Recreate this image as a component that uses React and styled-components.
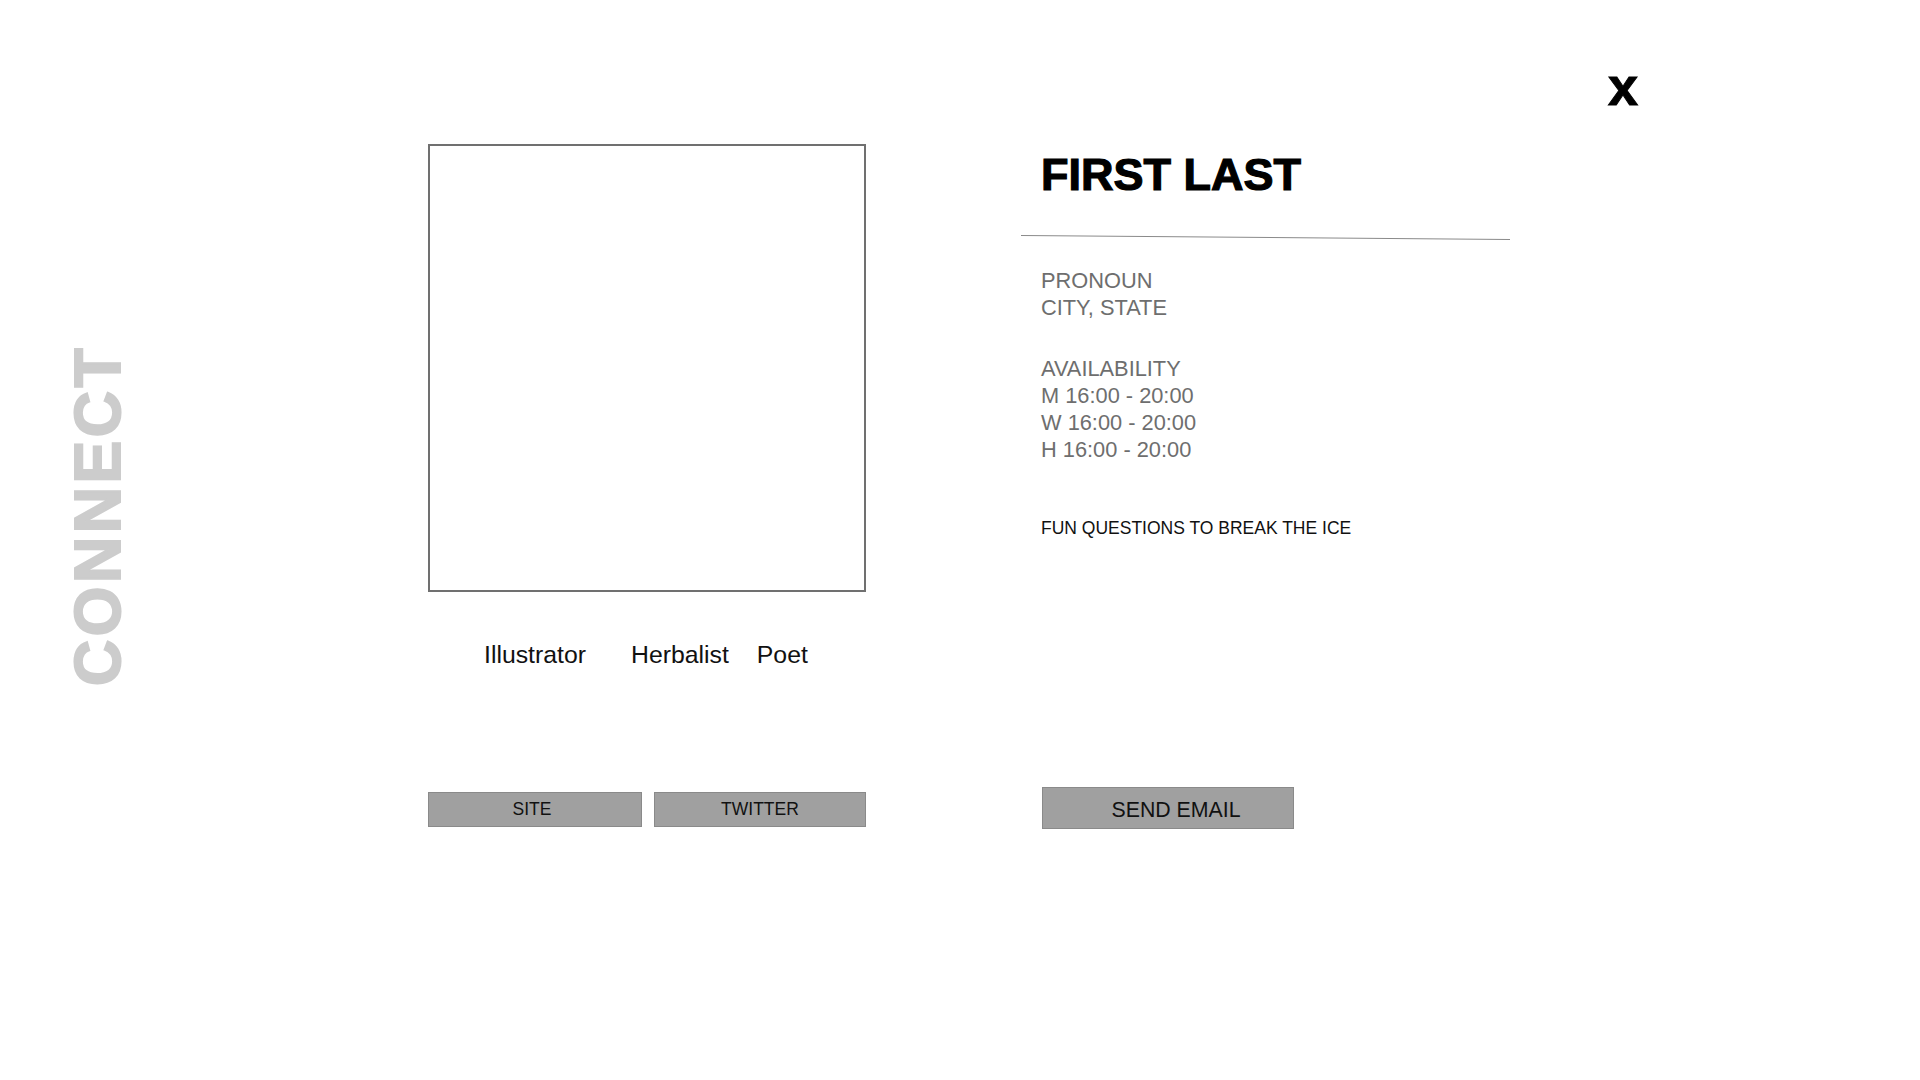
import React from "react";
import styled, { createGlobalStyle } from "styled-components";

const GlobalStyle = createGlobalStyle`
  html, body {
    margin: 0;
    padding: 0;
    background: #fff;
  }
  body {
    font-family: "Liberation Sans", Arial, Helvetica, sans-serif;
  }
  * {
    box-sizing: border-box;
  }
`;

const Page = styled.main`
  display: flex;
  width: 1920px;
  height: 1080px;
  background: #fff;
  overflow: hidden;
`;

// vertical "CONNECT" label on the far left
const Side = styled.aside`
  width: 195px;
  display: flex;
  align-items: center;
  justify-content: center;
  padding-bottom: 50px;
`;

const SideLabel = styled.h2`
  margin: 0;
  writing-mode: vertical-rl;
  transform: rotate(180deg);
  font-size: 64px;
  font-weight: 700;
  letter-spacing: 3.5px;
  line-height: 1;
  color: #cccccc;
  -webkit-text-stroke: 2px #cccccc;
`;

const Profile = styled.section`
  width: 438px;
  margin-left: 233px;
  padding-top: 144px;
  display: flex;
  flex-direction: column;
`;

const Photo = styled.div`
  width: 438px;
  height: 448px;
  border: 2px solid #707070;
  background: #fff;
`;

const Tags = styled.ul`
  list-style: none;
  display: flex;
  margin: 49px 0 0;
  padding: 0 0 0 56px;
`;

const Tag = styled.li`
  margin-left: ${(p) => p.$offset || 0}px;
  font-size: 24.8px;
  line-height: 28px;
  color: #111;
`;

const Links = styled.div`
  display: flex;
  gap: 12px;
  margin-top: 123px;
`;

const LinkButton = styled.button`
  width: ${(p) => p.$width}px;
  height: 35px;
  padding: 0 ${(p) => p.$shift || 0}px 0 0;
  background: #a0a0a0;
  border: 1px solid #8a8a8a;
  font-family: "Liberation Sans", Arial, sans-serif;
  font-size: 17.5px;
  color: #111;
  cursor: pointer;
`;

const Details = styled.section`
  width: 489px;
  margin-left: 155px;
  padding-top: 149px;
  display: flex;
  flex-direction: column;
`;

const Name = styled.h1`
  margin: 0;
  padding-left: 20px;
  font-size: 45px;
  line-height: 52px;
  font-weight: 700;
  color: #000;
  -webkit-text-stroke: 1.2px #000;
`;

const Divider = styled.hr`
  margin: 34px 0 0;
  width: 489px;
  height: 0;
  border: none;
  border-top: 1.5px solid #8a8a8a;
  transform: rotate(0.47deg);
  transform-origin: left center;
`;

const InfoGroup = styled.div`
  margin-top: ${(p) => p.$gap}px;
  padding-left: 20px;
  font-size: 21.8px;
  line-height: 27px;
  color: #6e6e6e;
`;

const Icebreaker = styled.p`
  margin: 55px 0 0;
  padding-left: 20px;
  font-size: 17.5px;
  line-height: 21px;
  color: #111;
`;

const SendButton = styled.button`
  width: 252px;
  height: 42px;
  margin: 248px 0 0 21px;
  padding: 4px 0 0 16px;
  background: #a0a0a0;
  border: 1px solid #8a8a8a;
  font-family: "Liberation Sans", Arial, sans-serif;
  font-size: 21.3px;
  color: #111;
  cursor: pointer;
`;

const CloseColumn = styled.div`
  margin-left: 98px;
  padding-top: 59px;
`;

const CloseButton = styled.button`
  padding: 0;
  border: none;
  background: none;
  font-family: "Liberation Sans", Arial, sans-serif;
  font-size: 54px;
  font-weight: 700;
  line-height: 54px;
  color: #000;
  -webkit-text-stroke: 1px #000;
  cursor: pointer;
`;

const tags = [
  { label: "Illustrator", offset: 0 },
  { label: "Herbalist", offset: 45 },
  { label: "Poet", offset: 28 },
];

const App = () => {
  return (
    <>
      <GlobalStyle />
      <Page>
        <Side>
          <SideLabel>CONNECT</SideLabel>
        </Side>

        <Profile>
          <Photo />
          <Tags>
            {tags.map((t) => (
              <Tag key={t.label} $offset={t.offset}>
                {t.label}
              </Tag>
            ))}
          </Tags>
          <Links>
            <LinkButton $width={214} $shift={6}>
              SITE
            </LinkButton>
            <LinkButton $width={212} $shift={0}>
              TWITTER
            </LinkButton>
          </Links>
        </Profile>

        <Details>
          <Name>FIRST LAST</Name>
          <Divider />
          <InfoGroup $gap={31}>
            <div>PRONOUN</div>
            <div>CITY, STATE</div>
          </InfoGroup>
          <InfoGroup $gap={34}>
            <div>AVAILABILITY</div>
            <div>M 16:00 - 20:00</div>
            <div>W 16:00 - 20:00</div>
            <div>H 16:00 - 20:00</div>
          </InfoGroup>
          <Icebreaker>FUN QUESTIONS TO BREAK THE ICE</Icebreaker>
          <div>
            <SendButton>SEND EMAIL</SendButton>
          </div>
        </Details>

        <CloseColumn>
          <CloseButton aria-label="close">x</CloseButton>
        </CloseColumn>
      </Page>
    </>
  );
};

export default App;
